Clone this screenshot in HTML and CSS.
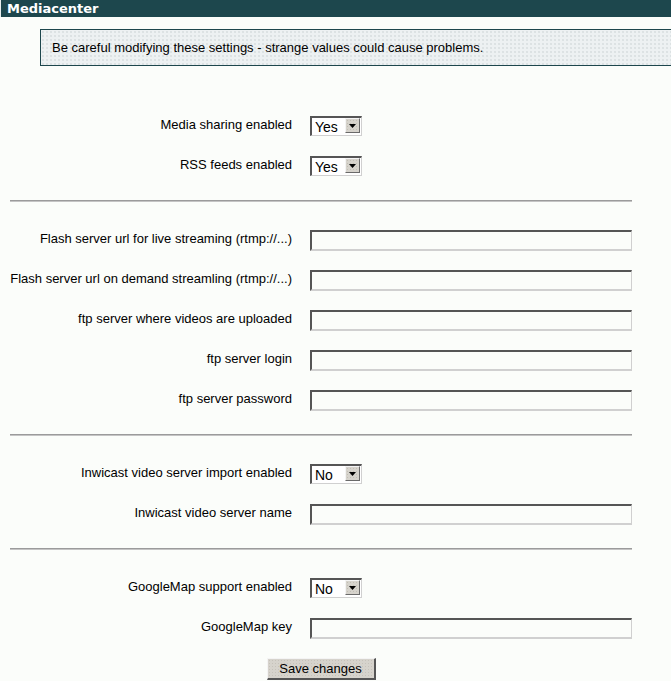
FILE: index.html
```html
<!DOCTYPE html>
<html>
<head>
<meta charset="utf-8">
<title>Mediacenter</title>
<link rel="stylesheet" href="styles.css">
</head>
<body>
<div class="header">Mediacenter</div>
<div class="notice">Be careful modifying these settings - strange values could cause problems.</div>
<form class="form">
  <div class="section">
    <div class="row"><label class="lbl">Media sharing enabled</label><span class="select"><select><option>Yes</option><option>No</option></select><span class="arrow"><svg width="7" height="4" viewBox="0 0 7 4"><path d="M0 0H7L3.5 4Z" fill="#000"/></svg></span></span></div>
    <div class="row"><label class="lbl">RSS feeds enabled</label><span class="select"><select><option>Yes</option><option>No</option></select><span class="arrow"><svg width="7" height="4" viewBox="0 0 7 4"><path d="M0 0H7L3.5 4Z" fill="#000"/></svg></span></span></div>
  </div>
  <hr class="rule">
  <div class="section">
    <div class="row"><label class="lbl">Flash server url for live streaming (rtmp://...)</label><input class="text" type="text"></div>
    <div class="row"><label class="lbl">Flash server url on demand streamling (rtmp://...)</label><input class="text" type="text"></div>
    <div class="row"><label class="lbl">ftp server where videos are uploaded</label><input class="text" type="text"></div>
    <div class="row"><label class="lbl">ftp server login</label><input class="text" type="text"></div>
    <div class="row"><label class="lbl">ftp server password</label><input class="text" type="password"></div>
  </div>
  <hr class="rule">
  <div class="section">
    <div class="row"><label class="lbl">Inwicast video server import enabled</label><span class="select"><select><option>No</option><option>Yes</option></select><span class="arrow"><svg width="7" height="4" viewBox="0 0 7 4"><path d="M0 0H7L3.5 4Z" fill="#000"/></svg></span></span></div>
    <div class="row"><label class="lbl">Inwicast video server name</label><input class="text" type="text"></div>
  </div>
  <hr class="rule">
  <div class="section">
    <div class="row"><label class="lbl">GoogleMap support enabled</label><span class="select"><select><option>No</option><option>Yes</option></select><span class="arrow"><svg width="7" height="4" viewBox="0 0 7 4"><path d="M0 0H7L3.5 4Z" fill="#000"/></svg></span></span></div>
    <div class="row"><label class="lbl">GoogleMap key</label><input class="text" type="text"></div>
  </div>
  <div class="actions"><button type="button" class="btn">Save changes</button></div>
</form>
</body>
</html>
```
FILE: styles.css
```css
html, body {
  margin: 0;
  padding: 0;
  background: #fbfdfa;
  overflow: hidden;
}
body {
  font-family: "Liberation Sans", Arial, sans-serif;
  font-size: 13px;
  color: #000;
}
.header {
  height: 17px;
  line-height: 17px;
  background: #1d474d;
  color: #fff;
  font-family: "DejaVu Sans", Verdana, sans-serif;
  font-weight: bold;
  font-size: 13px;
  padding-left: 6px;
  border-left: 1px solid #e8eeee;
}
.notice {
  margin: 12px 0 0 40px;
  box-sizing: border-box;
  height: 37px;
  border: 1px solid #1d474d;
  border-right: none;
  background-color: #edf1f2;
  background-image: radial-gradient(circle, #d3dadc 0.6px, transparent 0.9px);
  background-size: 4px 4px;
  padding: 10px 0 0 11px;
  line-height: 15px;
  font-size: 13px;
}
.form {
  margin: 40px 0 0 10px;
  width: 622px;
}
.row {
  display: grid;
  grid-template-columns: 282px 322px;
  column-gap: 18px;
  height: 40px;
  align-items: center;
}
.lbl {
  text-align: right;
  white-space: nowrap;
  padding-bottom: 3px;
}
.rule {
  margin: 14px 0 18px 0;
  height: 0;
  border: none;
  border-top: 1px solid #9b9b9b;
  border-bottom: 1px solid #c4c4c4;
}
.text {
  box-sizing: border-box;
  width: 322px;
  height: 21px;
  margin: 0;
  padding: 0 3px;
  background: #fbfdfa;
  border-top: 2px solid #555;
  border-left: 2px solid #555;
  border-right: 1px solid #d0d0d0;
  border-bottom: 2px solid #d0d0d0;
  font: 13px "Liberation Sans", Arial, sans-serif;
}
.select {
  position: relative;
  display: inline-block;
  width: 52px;
  height: 20px;
}
.select select {
  appearance: none;
  -webkit-appearance: none;
  box-sizing: border-box;
  width: 52px;
  height: 20px;
  margin: 0;
  padding: 0 0 0 3px;
  background: #fff;
  border-top: 2px solid #555;
  border-left: 2px solid #555;
  border-right: 1px solid #d0d0d0;
  border-bottom: 1px solid #d0d0d0;
  border-radius: 0;
  font: 14px "Liberation Sans", Arial, sans-serif;
  color: #000;
}
.arrow {
  position: absolute;
  top: 2px;
  right: 2px;
  width: 15px;
  height: 15px;
  box-sizing: border-box;
  background-color: #d6d3cc;
  background-image: radial-gradient(circle, #c2beb5 0.6px, transparent 0.9px);
  background-size: 3px 3px;
  border-top: 1px solid #f4f4f4;
  border-left: 1px solid #f4f4f4;
  border-right: 1px solid #6a6a6a;
  border-bottom: 1px solid #6a6a6a;
  display: flex;
  align-items: center;
  justify-content: center;
  pointer-events: none;
}
.actions {
  display: flex;
  justify-content: center;
  margin-top: 10px;
}
.btn {
  box-sizing: border-box;
  width: 109px;
  height: 22px;
  margin: 0;
  padding: 0;
  background-color: #d6d3cc;
  background-image: radial-gradient(circle, #c6c2ba 0.6px, transparent 0.9px);
  background-size: 3px 3px;
  border-top: 1px solid #f4f4f4;
  border-left: 1px solid #f4f4f4;
  border-right: 2px solid #555;
  border-bottom: 2px solid #555;
  font: 13px "Liberation Sans", Arial, sans-serif;
  color: #000;
}
```
